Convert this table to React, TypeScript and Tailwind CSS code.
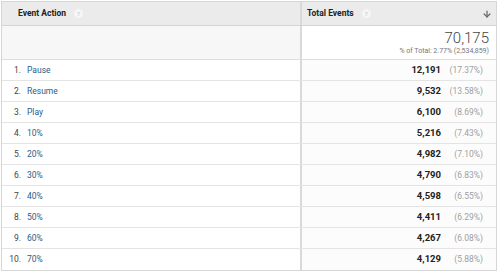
import { ArrowDown } from "lucide-react";

const rows = [
  { label: "Pause", value: "12,191", pct: "(17.37%)" },
  { label: "Resume", value: "9,532", pct: "(13.58%)" },
  { label: "Play", value: "6,100", pct: "(8.69%)" },
  { label: "10%", value: "5,216", pct: "(7.43%)" },
  { label: "20%", value: "4,982", pct: "(7.10%)" },
  { label: "30%", value: "4,790", pct: "(6.83%)" },
  { label: "40%", value: "4,598", pct: "(6.55%)" },
  { label: "50%", value: "4,411", pct: "(6.29%)" },
  { label: "60%", value: "4,267", pct: "(6.08%)" },
  { label: "70%", value: "4,129", pct: "(5.88%)" },
];

function Help() {
  return (
    <span className="ml-[8px] inline-flex h-[9px] w-[9px] items-center justify-center rounded-full bg-[#f6f6f6] text-[6px] text-[#cfcfcf]">
      ?
    </span>
  );
}

export default function App() {
  return (
    <div className="h-[271px] w-[498px] bg-white pt-px font-['Roboto',Arial,sans-serif]">
      <div className="ml-px w-[496px] border border-[#d6d6d6]">
        {/* header */}
        <div className="grid h-[24px] grid-cols-[300px_1fr] bg-[#ebebeb] border-b border-[#d4d4d4]">
          <div className="flex items-center border-r-2 border-[#d9d9d9] pl-[16px] text-[8.5px] font-bold text-[#222]">
            Event Action
            <Help />
          </div>
          <div className="flex items-center pl-[5px] pr-[4px] text-[8.5px] font-bold text-[#222]">
            Total Events
            <Help />
            <ArrowDown size={10} strokeWidth={3} className="ml-auto text-[#666]" />
          </div>
        </div>
        {/* totals */}
        <div className="grid h-[34px] grid-cols-[300px_1fr] border-b border-[#dedede]">
          <div className="border-r-2 border-[#d9d9d9] bg-[#f7f7f7]" />
          <div className="flex flex-col items-end justify-center pr-[7px] text-[#444]">
            <div className="text-[15px] leading-[17px] font-light">70,175</div>
            <div className="text-[7px] leading-[9px] text-[#777]">% of Total: 2.77% (2,534,859)</div>
          </div>
        </div>
        {rows.map((r, i) => (
          <div
            key={r.label}
            className="grid h-[21px] grid-cols-[300px_1fr] border-b border-[#e4e4e4] last:border-b-0 text-[8.5px]"
          >
            <div className="flex items-center border-r-2 border-[#d9d9d9]">
              <span className="w-[19px] text-right text-[#444]">{i + 1}.</span>
              <span className="ml-[6px] text-[#2a5d8a]">{r.label}</span>
            </div>
            <div className="flex items-center justify-end bg-[#fcfcfc] pr-[13px]">
              <span className="text-[9.5px] font-bold text-[#222]">{r.value}</span>
              <span className="w-[42px] text-right text-[8.5px] text-[#a0a0a0]">{r.pct}</span>
            </div>
          </div>
        ))}
      </div>
    </div>
  );
}
